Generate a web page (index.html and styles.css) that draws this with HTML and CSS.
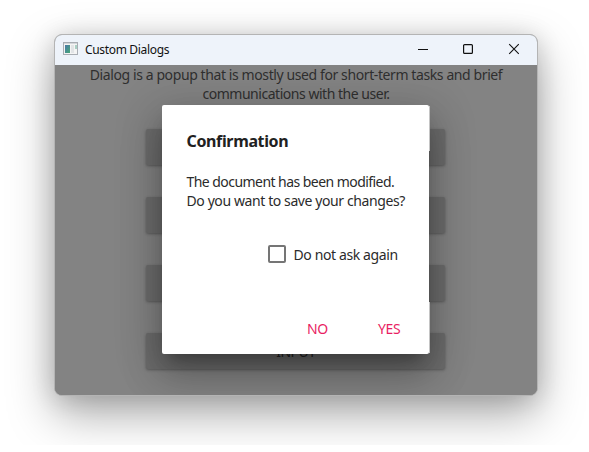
FILE: index.html
```html
<!DOCTYPE html>
<html lang="en">
<head>
<meta charset="utf-8">
<title>Custom Dialogs</title>
<link rel="stylesheet" href="styles.css">
</head>
<body>
<div class="desktop">
  <div class="window">
    <header class="titlebar">
      <svg class="app-icon" width="16" height="14" viewBox="0 0 16 14">
        <defs><linearGradient id="pane" x1="0" y1="0" x2="1" y2="1"><stop offset="0" stop-color="#4a78a8"/><stop offset="1" stop-color="#46a876"/></linearGradient></defs>
        <rect x=".5" y=".5" width="14" height="12" fill="#f4f4f4" stroke="#a9adb3"/>
        <rect x="1" y="1" width="13" height="1" fill="#d3d6da"/>
        <rect x="2" y="3" width="5" height="8" fill="url(#pane)"/>
        <rect x="8" y="3" width="3" height="8" fill="#e2e4e6"/>
        <rect x="12" y="3" width="2" height="4" fill="#a9cfc4"/>
      </svg>
      <span class="title">Custom Dialogs</span>
      <svg class="controls" width="102" height="12" viewBox="0 0 102 12" fill="none" stroke="#111">
        <path d="M0 6.5h10"/>
        <rect x="45.6" y="1.6" width="8.8" height="8.8" rx="1" stroke-width="1.2"/>
        <path d="M91.2 1.2l9.6 9.6M100.8 1.2l-9.6 9.6" stroke-width="1.1"/>
      </svg>
    </header>
    <main class="content">
      <p class="intro"><span class="intro-a">Dialog is a popup that is mostly used for short-term tasks and brief</span><br><span class="intro-b">communications with the user.</span></p>
      <div class="buttons">
        <div class="button"></div>
        <div class="button"></div>
        <div class="button"></div>
        <div class="button">INPUT</div>
      </div>
      <section class="dialog">
        <h1>Confirmation</h1>
        <p class="message"><span class="msg-a">The document has been modified.</span><br><span class="msg-b">Do you want to save your changes?</span></p>
        <div class="option"><span class="checkbox"></span><span class="option-label">Do not ask again</span></div>
        <footer class="actions"><span class="no">NO</span><span class="yes">YES</span></footer>
      </section>
    </main>
  </div>
</div>
</body>
</html>
```
FILE: styles.css
```css
* { box-sizing: border-box; }
body {
  margin: 0;
  background: #fff;
  font: 14px/19px "Noto Sans", "Open Sans", sans-serif;
}
.desktop {
  width: 589px;
  height: 445px;
  padding: 34px 51px 0 54px;
  overflow: hidden;
}
.window {
  width: 484px;
  height: 362px;
  border: 1px solid #b4b4b4;
  border-radius: 8px;
  background: #838383;
  box-shadow: 0 18px 46px rgba(0, 0, 0, .34), 0 2px 24px rgba(0, 0, 0, .14);
  overflow: hidden;
}
.titlebar {
  display: flex;
  align-items: center;
  height: 30px;
  padding: 0 17px 0 8px;
  background: #eef3fa;
}
.app-icon { margin-top: -2px; }
.title {
  margin: -1px 0 0 6px;
  font-size: 12px;
  letter-spacing: -.33px;
  color: #111;
}
.controls { margin-left: auto; margin-top: -2px; }
.content {
  position: relative;
  height: 330px;
  background: #838383;
}
.intro { margin: 0; text-align: center; color: #2f2f2f; white-space: nowrap; }
.intro-a { letter-spacing: -.4px; }
.intro-b { letter-spacing: -.47px; }
.buttons {
  display: grid;
  row-gap: 32px;
  width: 299px;
  margin: 26px 0 0 91.4px;
}
.button {
  height: 36px;
  border-radius: 2px;
  background: #6d6d6d;
  box-shadow: 0 1px 3px rgba(0, 0, 0, .32);
  line-height: 38px;
  letter-spacing: -.5px;
  text-align: center;
  color: #242424;
}
.dialog {
  position: absolute;
  left: 107px;
  top: 40px;
  width: 267px;
  height: 249px;
  padding: 26px 24px 0;
  border-radius: 2px;
  background: #fff;
  box-shadow: 0 11px 15px -7px rgba(0, 0, 0, .28), 0 20px 38px 3px rgba(0, 0, 0, .22), 0 9px 46px 8px rgba(0, 0, 0, .12);
  color: #2b2b2b;
}
/* Light edge at the upper and lower right of the popup */
.dialog::after {
  content: "";
  position: absolute;
  top: 1px;
  right: -1px;
  width: 1px;
  height: 247px;
  background: linear-gradient(#c4c4c4 45px, transparent 45px 196px, #c4c4c4 196px);
}
h1 { margin: 0; font-size: 16px; line-height: 21px; letter-spacing: -.36px; color: #212121; }
h1, .message { padding-left: .5px; }
.message { margin: 20px 0 0; white-space: nowrap; }
.msg-a { letter-spacing: -.55px; }
.msg-b { letter-spacing: -.4px; }
.option { display: flex; align-items: center; margin: 34px 0 0 81.5px; }
.checkbox { width: 18px; height: 18px; border: 2px solid #757575; border-radius: 2px; }
.option-label { margin: 1px 0 0 8px; letter-spacing: -.39px; white-space: nowrap; }
.actions { display: flex; margin: 55px 0 0 121px; letter-spacing: -.4px; color: #e91e63; }
.no { width: 71px; }
```
